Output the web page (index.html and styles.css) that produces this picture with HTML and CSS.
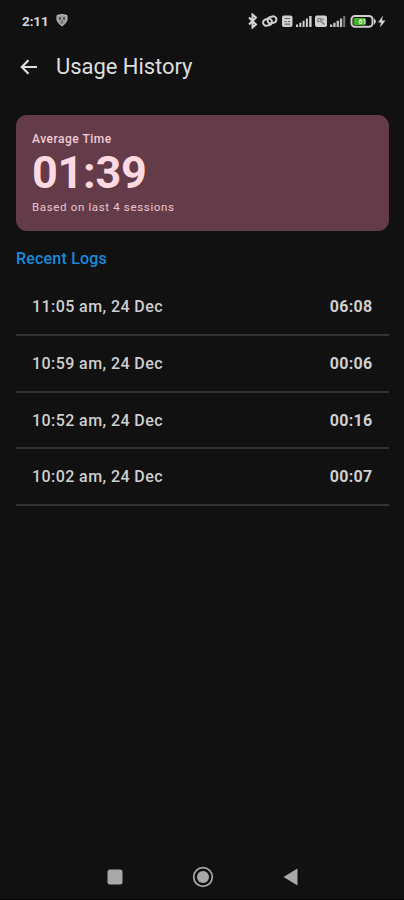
FILE: index.html
```
<!DOCTYPE html>
<html lang="en">
<head>
<meta charset="utf-8">
<title>Usage History</title>
<link rel="stylesheet" href="styles.css">
</head>
<body>
<div class="screen">
  <header class="status">
    <span class="clock">2:11</span>
    <svg class="shield" width="12" height="13" viewBox="0 0 12 13"><path d="M1 1.500Q6-.5 11 1.500V6Q10 9.500 6 12Q2 9.500 1 6Z" fill="#999" stroke="#c4c4c4"/><path d="M3 3.500h2v2H3zM7 3.500h2v2H7zM5.500 6.500h1v3h-1z" fill="#444"/></svg>
    <svg class="indicators" width="142" height="16" viewBox="0 0 142 16">
      <path d="M3 4.500l7 7-3.500 3V1.500l3.500 3-7 7" fill="none" stroke="#d4d4d4" stroke-width="2"/>
      <g fill="none" stroke="#cfcfcf" stroke-width="2"><rect x="17" y="6" width="9" height="6.400" rx="3.200" transform="rotate(-15 21.500 9.200)"/><rect x="21.500" y="3.700" width="9" height="6.400" rx="3.200" transform="rotate(-15 26 7)"/></g>
      <g transform="translate(2 0)">
        <rect x="34" y="2.500" width="10.500" height="11.500" rx="2" fill="#d0d0d0"/>
        <path d="M36.500 5.500h5.500M36.500 8.500h2.300m1.200 0h2M36.500 11.200h5.500" stroke="#666" stroke-width="1.200"/>
        <path d="M48 11.500h2V14h-2zM51.300 9.700h2V14h-2zM54.600 7.700h2V14h-2zM57.900 5.500h2V14h-2zM61.200 3h2.400v11h-2.400z" fill="#d0d0d0"/>
        <rect x="67" y="2.500" width="12" height="11.500" rx="2" fill="#d0d0d0"/>
        <path d="M70 5.500h3v3h-3zM73.500 9l3 2.500M75 5.500v2" fill="none" stroke="#777" stroke-width="1.200"/>
        <path d="M82 11.500h2.300V14H82zM85.300 9.700h2.300V14h-2.300zM88.600 7.700h2.300V14h-2.300zM91.900 5.500h2.300V14h-2.300z" fill="#c4c4c4"/><path d="M95.200 3h2v11h-2z" fill="#777"/>
        <rect x="103.500" y="3" width="21" height="10.800" rx="3.500" fill="#111" stroke="#cfcfcf" stroke-width="2"/>
        <rect x="105.500" y="5" width="12" height="7" rx="1.500" fill="#48b321"/>
        <path d="M126 5.500q3 3 0 6" fill="#cfcfcf" stroke="#cfcfcf"/>
        <text x="110.500" y="11.200" class="charge">61</text>
        <path d="M135 2.500l-5 7h3l-1 5 5.500-7H134z" fill="#d4d4d4"/>
      </g>
    </svg>
  </header>
  <div class="appbar">
    <svg width="18" height="16" viewBox="0 0 18 16"><path d="M17 8H2M8.500 1.300L1.800 8l6.700 6.700" fill="none" stroke="#dedede" stroke-width="2.200"/></svg>
    <h1>Usage History</h1>
  </div>
  <main>
    <section class="card">
      <div class="label">Average Time</div>
      <div class="average">01:39</div>
      <div class="basis">Based on last 4 sessions</div>
    </section>
    <h2>Recent Logs</h2>
    <ul class="logs">
      <li><span>11:05 am, 24 Dec</span><b>06:08</b></li>
      <li><span>10:59 am, 24 Dec</span><b>00:06</b></li>
      <li><span>10:52 am, 24 Dec</span><b>00:16</b></li>
      <li><span>10:02 am, 24 Dec</span><b>00:07</b></li>
    </ul>
  </main>
  <nav class="navbar">
    <svg width="16" height="16" viewBox="0 0 16 16"><rect x=".5" y=".5" width="15" height="15" rx="2.500" fill="#a9a9a9"/></svg>
    <svg width="22" height="22" viewBox="0 0 22 22"><circle cx="11" cy="11" r="9.300" fill="none" stroke="#a9a9a9" stroke-width="1.700"/><circle cx="11" cy="11" r="6" fill="#a9a9a9"/></svg>
    <svg width="15" height="18" viewBox="0 0 15 18"><path d="M.5 9L14.500.5v17z" fill="#a9a9a9"/></svg>
  </nav>
</div>
</body>
</html>
```
FILE: styles.css
```
* { box-sizing: border-box; }
body { margin: 0; background: #111; color: #d8d8d8; font-family: Roboto, sans-serif; }
.screen { width: 404px; height: 900px; display: flex; flex-direction: column; overflow: hidden; border-bottom: 1px solid #050505; }
.status { height: 41px; display: flex; align-items: center; padding: 0 16px 0 22px; flex: none; }
.clock { width: 34px; font-size: 13.5px; font-weight: 700; letter-spacing: -.1px; }
.indicators { margin-left: auto; }
.charge { font-size: 7px; font-weight: 700; fill: #e4f5dc; }
.appbar { height: 51px; display: flex; align-items: center; gap: 18px; padding-left: 20px; flex: none; }
h1 { margin: 0; font-size: 22px; font-weight: 400; letter-spacing: -.05px; line-height: 28px; color: #dedede; white-space: nowrap; }
main { padding: 23px 15px 0 16px; flex: 1; }
.card { height: 116px; padding: 16px; border-radius: 11px; background: #643c49; color: #ffd9e2; }
.label { font-size: 12px; line-height: 16px; font-weight: 500; letter-spacing: .5px; color: #f0cbd5; }
.average { font-size: 45px; line-height: 52px; font-weight: 700; letter-spacing: -.3px; }
.basis { font-size: 11.5px; line-height: 17px; font-weight: 400; letter-spacing: .65px; color: #ecc4cf; white-space: nowrap; }
h2 { margin: 17px 0 0; font-size: 16px; line-height: 22px; font-weight: 500; letter-spacing: .2px; color: #168bdc; }
.logs { list-style: none; margin: 9.3px 0 0; padding: 0; }
.logs li { height: 56.7px; padding: 0 16.500px 0 16px; display: flex; justify-content: space-between; align-items: center; border-bottom: 2px solid #333; font-size: 16px; font-weight: 500; letter-spacing: .42px; color: #cfcfcf; }
.logs b { font-weight: 700; letter-spacing: .3px; }
.navbar { height: 45px; display: flex; align-items: center; justify-content: space-between; padding: 1px 106px 0 107px; flex: none; }
```
